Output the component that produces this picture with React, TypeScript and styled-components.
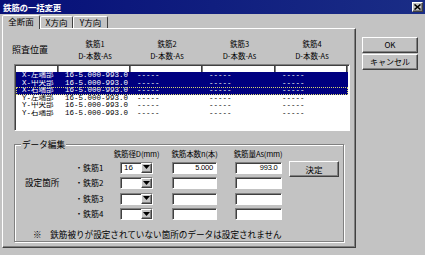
import React from 'react';
import styled, { createGlobalStyle, css } from 'styled-components';

const GlobalStyle = createGlobalStyle`
  html, body {
    margin: 0;
    padding: 0;
    background: #c3c3c3;
  }
`;

const uiFont = `"Noto Sans CJK JP", "Liberation Sans", sans-serif`;
const monoFont = `"Liberation Mono", "Noto Sans CJK JP", monospace`;

const raised = css`
  border: 1px solid;
  border-color: #fff #404040 #404040 #fff;
  box-shadow: inset -1px -1px #808080;
`;

const sunken = css`
  border: 1px solid;
  border-color: #808080 #fff #fff #808080;
  box-shadow: inset 1px 1px #404040;
`;

const columns = '43px 72px 72px 73px 72px';

const positions = [
  { name: 'X-左端部', selected: true },
  { name: 'X-中央部', selected: true },
  { name: 'X-右端部', selected: true, focused: true },
  { name: 'Y-左端部' },
  { name: 'Y-中央部' },
  { name: 'Y-右端部' },
];

const bars = [
  { label: '鉄筋1', dia: '16', count: '5.000', area: '993.0' },
  { label: '鉄筋2', dia: '', count: '', area: '' },
  { label: '鉄筋3', dia: '', count: '', area: '' },
  { label: '鉄筋4', dia: '', count: '', area: '' },
];

const DownArrow = () => (
  <svg width="7" height="5" viewBox="0 0 7 5">
    <polygon points="0,0 7,0 3.5,4" fill="#000" />
  </svg>
);

const App = () => {
  return (
    <>
      <GlobalStyle />
      <Window>
        <TitleBar>
          <Title>鉄筋の一括変更</Title>
          <CloseButton>
            <svg width="7" height="6" viewBox="0 0 7 6">
              <path d="M0.5 0.5 L6.5 5.5 M6.5 0.5 L0.5 5.5" stroke="#000" strokeWidth="1.6" />
            </svg>
          </CloseButton>
        </TitleBar>

        <Body>
          <LeftColumn>
            <TabRow>
              <Tab $active $width={38}>全断面</Tab>
              <Tab $width={33}>X方向</Tab>
              <Tab $width={35}>Y方向</Tab>
            </TabRow>

            <Panel>
              <HeaderGrid>
                <PositionLabel>照査位置</PositionLabel>
                {[1, 2, 3, 4].map((n) => (
                  <ColumnLabel key={n}>
                    <span>鉄筋{n}</span>
                    <span>D-本数-As</span>
                  </ColumnLabel>
                ))}
              </HeaderGrid>

              <ListBox>
                <ListHeader>
                  {[0, 1, 2, 3, 4].map((i) => (
                    <ListHeaderCell key={i} />
                  ))}
                </ListHeader>
                {positions.map((p) => (
                  <ListRow key={p.name} $selected={!!p.selected} $focused={!!p.focused}>
                    <ListCell>{p.name}</ListCell>
                    <ListCell>16-5.000-993.0</ListCell>
                    <ListCell>-----</ListCell>
                    <ListCell>-----</ListCell>
                    <ListCell>-----</ListCell>
                  </ListRow>
                ))}
              </ListBox>

              <GroupBox>
                <Legend>データ編集</Legend>
                <EditGrid>
                  <EditHead $col={3}>鉄筋径D(mm)</EditHead>
                  <EditHead $col={4}>鉄筋本数n(本)</EditHead>
                  <EditHead $col={5}>鉄筋量As(mm)</EditHead>

                  <SettingLabel>設定箇所</SettingLabel>

                  {bars.map((b, i) => (
                    <React.Fragment key={b.label}>
                      <BarLabel $row={i + 2}>・{b.label}</BarLabel>
                      <Combo $row={i + 2}>
                        <ComboValue>{b.dia}</ComboValue>
                        <ComboButton>
                          <DownArrow />
                        </ComboButton>
                      </Combo>
                      <TextBox $row={i + 2} $col={4} $width={45}>{b.count}</TextBox>
                      <TextBox $row={i + 2} $col={5} $width={47}>{b.area}</TextBox>
                    </React.Fragment>
                  ))}

                  <ApplyButton>決定</ApplyButton>
                </EditGrid>
                <Footnote>※　鉄筋被りが設定されていない箇所のデータは設定されません</Footnote>
              </GroupBox>
            </Panel>
          </LeftColumn>

          <ButtonColumn>
            <DialogButton>OK</DialogButton>
            <DialogButton>キャンセル</DialogButton>
          </ButtonColumn>
        </Body>
      </Window>
    </>
  );
};

const Window = styled.div`
  width: 425px;
  height: 255px;
  overflow: hidden;
  background: #c3c3c3;
  font-family: ${uiFont};
  color: #000;
`;

const TitleBar = styled.div`
  height: 14px;
  display: flex;
  align-items: center;
  padding-left: 3px;
  background: linear-gradient(90deg, #060f78, #1a2d86);
`;

const Title = styled.span`
  color: #fff;
  font-size: 8.5px;
  font-weight: 700;
  line-height: 14px;
  letter-spacing: -0.2px;
`;

const CloseButton = styled.div`
  ${raised};
  margin-left: auto;
  margin-right: 2px;
  width: 11px;
  height: 10px;
  box-sizing: border-box;
  background: #c3c3c3;
  display: flex;
  align-items: center;
  justify-content: center;
`;

const Body = styled.div`
  display: flex;
  padding-left: 2px;
`;

const LeftColumn = styled.div`
  display: flex;
  flex-direction: column;
  width: 354px;
`;

const TabRow = styled.div`
  height: 14px;
  display: flex;
  align-items: flex-end;
`;

const Tab = styled.div<{ $active?: boolean; $width: number }>`
  position: relative;
  z-index: ${(p) => (p.$active ? 2 : 1)};
  width: ${(p) => p.$width}px;
  height: ${(p) => (p.$active ? 14 : 12)}px;
  margin-bottom: ${(p) => (p.$active ? -1 : 0)}px;
  box-sizing: border-box;
  border: 1px solid;
  border-bottom: none;
  border-color: #fff #404040 transparent #fff;
  border-radius: 2px 2px 0 0;
  background: #c3c3c3;
  font-size: 8.5px;
  line-height: 11px;
  text-align: center;
  white-space: nowrap;
`;

const Panel = styled.div`
  ${raised};
  height: 220px;
  box-sizing: border-box;
  padding: 9px 0 0 9px;
  display: flex;
  flex-direction: column;
`;

const HeaderGrid = styled.div`
  display: grid;
  grid-template-columns: 47px 72px 72px 73px 72px;
  height: 24px;
  align-items: center;
`;

const PositionLabel = styled.span`
  font-size: 9px;
  line-height: 12px;
  white-space: nowrap;
`;

const ColumnLabel = styled.div`
  display: flex;
  flex-direction: column;
  align-items: center;
  font-size: 7.5px;
  line-height: 12px;
  white-space: nowrap;
`;

const ListBox = styled.div`
  ${sunken};
  border-width: 1px;
  margin: 2px 0 0 2px;
  width: 336px;
  height: 67px;
  box-sizing: border-box;
  padding: 1px;
  background: #fff;
`;

const ListHeader = styled.div`
  display: grid;
  grid-template-columns: ${columns};
  height: 6px;
`;

const ListHeaderCell = styled.div`
  border-right: 1px solid #808080;
  box-shadow: inset -1px 0 #404040;
`;

const ListRow = styled.div<{ $selected: boolean; $focused: boolean }>`
  display: grid;
  grid-template-columns: ${columns};
  height: 7.6px;
  box-sizing: border-box;
  background: ${(p) => (p.$selected ? '#000080' : '#fff')};
  color: ${(p) => (p.$selected ? '#fff' : '#000')};
  outline: ${(p) => (p.$focused ? '1px dotted #d8d870' : 'none')};
  outline-offset: -1px;
`;

const ListCell = styled.span`
  padding-left: 6px;
  font-family: ${monoFont};
  font-size: 7.5px;
  line-height: 7.6px;
  white-space: nowrap;
  overflow: hidden;
`;

const GroupBox = styled.div`
  position: relative;
  margin: 13px 0 0 2px;
  width: 330px;
  height: 98px;
  box-sizing: border-box;
  border: 1px solid #808080;
  box-shadow: inset 1px 1px #fff, 1px 1px #fff;
  padding-top: 4px;
`;

const Legend = styled.span`
  position: absolute;
  top: -6px;
  left: 6px;
  padding: 0 1px;
  background: #c3c3c3;
  font-size: 8.6px;
  line-height: 10px;
`;

const EditGrid = styled.div`
  display: grid;
  grid-template-columns: 60px 36px 51px 65px 62px 50px;
  grid-template-rows: 9px repeat(4, 12px);
  row-gap: 3.5px;
`;

const EditHead = styled.span<{ $col: number }>`
  grid-row: 1;
  grid-column: ${(p) => p.$col};
  justify-self: center;
  font-size: 7.6px;
  line-height: 9px;
  white-space: nowrap;
  letter-spacing: -0.2px;
`;

const SettingLabel = styled.span`
  grid-row: 3;
  grid-column: 1;
  padding-left: 10px;
  font-size: 8.6px;
  line-height: 10px;
  align-self: start;
  white-space: nowrap;
`;

const BarLabel = styled.span<{ $row: number }>`
  grid-row: ${(p) => p.$row};
  grid-column: 2;
  align-self: center;
  font-size: 8px;
  line-height: 12px;
  white-space: nowrap;
`;

const Combo = styled.div<{ $row: number }>`
  ${sunken};
  grid-row: ${(p) => p.$row};
  grid-column: 3;
  justify-self: center;
  width: 33px;
  height: 12px;
  box-sizing: border-box;
  background: #fff;
  display: flex;
`;

const ComboValue = styled.span`
  flex: 1;
  padding-left: 3px;
  font-family: "Liberation Sans", sans-serif;
  font-size: 8px;
  line-height: 10px;
`;

const ComboButton = styled.div`
  ${raised};
  width: 11px;
  height: 10px;
  box-sizing: border-box;
  background: #c3c3c3;
  display: flex;
  align-items: center;
  justify-content: center;
`;

const TextBox = styled.div<{ $row: number; $col: number; $width: number }>`
  ${sunken};
  grid-row: ${(p) => p.$row};
  grid-column: ${(p) => p.$col};
  justify-self: center;
  width: ${(p) => p.$width}px;
  height: 12px;
  box-sizing: border-box;
  background: #fff;
  padding-right: 3px;
  text-align: right;
  font-family: "Liberation Sans", sans-serif;
  font-size: 7.5px;
  line-height: 10px;
  letter-spacing: -0.2px;
`;

const ApplyButton = styled.div`
  ${raised};
  grid-row: 2;
  grid-column: 6;
  align-self: start;
  margin-top: -0.5px;
  width: 50px;
  height: 16px;
  box-sizing: border-box;
  background: #c3c3c3;
  font-size: 8.5px;
  line-height: 14px;
  text-align: center;
`;

const Footnote = styled.div`
  margin-top: 9px;
  padding-left: 18px;
  font-size: 8.6px;
  line-height: 10px;
  white-space: nowrap;
`;

const ButtonColumn = styled.div`
  display: flex;
  flex-direction: column;
  gap: 1px;
  margin: 23px 0 0 6px;
`;

const DialogButton = styled.div`
  ${raised};
  width: 56px;
  height: 16px;
  box-sizing: border-box;
  background: #c3c3c3;
  font-size: 8px;
  line-height: 14px;
  text-align: center;
  white-space: nowrap;
`;

export default App;
